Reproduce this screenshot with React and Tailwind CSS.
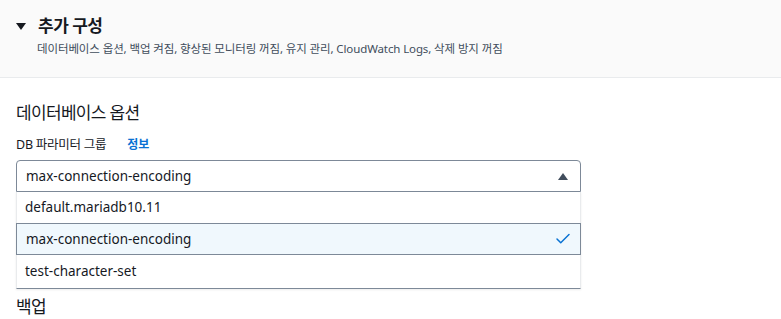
import { Check } from 'lucide-react';

const options = ['default.mariadb10.11', 'max-connection-encoding', 'test-character-set'];

const App = () => {
  const selected = 'max-connection-encoding';

  return (
    <div className="w-[781px] h-[319px] overflow-hidden bg-white text-[#16191f]" style={{ fontFamily: '"Noto Sans", "Noto Sans CJK KR", sans-serif' }}>
      <div className="h-[78px] bg-[#fafafa] border-b border-[#e9ebed] pl-[16px] pt-[13px]">
        <div className="flex items-center gap-[12px]">
          <span className="w-0 h-0 border-l-[5px] border-r-[5px] border-t-[7px] border-l-transparent border-r-transparent border-t-[#16191f]" />
          <h2 className="text-[17px] font-bold leading-[26px] tracking-[-0.03em]">추가 구성</h2>
        </div>
        <p className="pl-[21px] text-[11.5px] leading-[18px] text-[#414d5c] mt-[1px] tracking-[-0.01em]">
          데이터베이스 옵션, 백업 켜짐, 향상된 모니터링 꺼짐, 유지 관리, CloudWatch Logs, 삭제 방지 꺼짐
        </p>
      </div>

      <div className="px-[16px] pt-[22px]">
        <h3 className="text-[17px] leading-[26px] tracking-[-0.04em]">데이터베이스 옵션</h3>
        <div className="flex items-center gap-[21px] mt-[10px] text-[12.5px] leading-[18px]">
          <span className="tracking-[-0.02em]">DB 파라미터 그룹</span>
          <span className="text-[#0972d3] font-bold text-[12px]">정보</span>
        </div>

        <div className="w-[565px] mt-[6px]">
          <div className="h-[32px] flex items-center justify-between border border-[#7d8998] rounded-t-[4px] pl-[9px] pr-[12px] text-[13.5px]">
            <span>{selected}</span>
            <span className="w-0 h-0 border-l-[5px] border-r-[5px] border-b-[7px] border-l-transparent border-r-transparent border-b-[#414d5c]" />
          </div>
          <div className="border-x border-b border-x-[#e9ebed] border-b-[#7d8998] shadow-[0_1px_2px_rgba(0,0,0,0.08)]">
            {options.map((opt, i) => (
              <div
                key={opt}
                className={
                  opt === selected
                    ? 'h-[32px] -mx-px flex items-center justify-between border border-[#7d8998] bg-[#f0f8fd] pl-[9px] pr-[8px] text-[13.5px]'
                    : i === options.length - 1
                      ? 'h-[33px] flex items-center pl-[8px] text-[13.5px]'
                      : 'h-[31px] flex items-center pl-[8px] text-[13.5px]'
                }
              >
                <span>{opt}</span>
                {opt === selected && <Check size={18} strokeWidth={2} className="text-[#0972d3]" />}
              </div>
            ))}
          </div>
        </div>

        <h3 className="text-[17px] leading-[26px] mt-[5px] tracking-[-0.04em]">백업</h3>
      </div>
    </div>
  );
};

export default App;
